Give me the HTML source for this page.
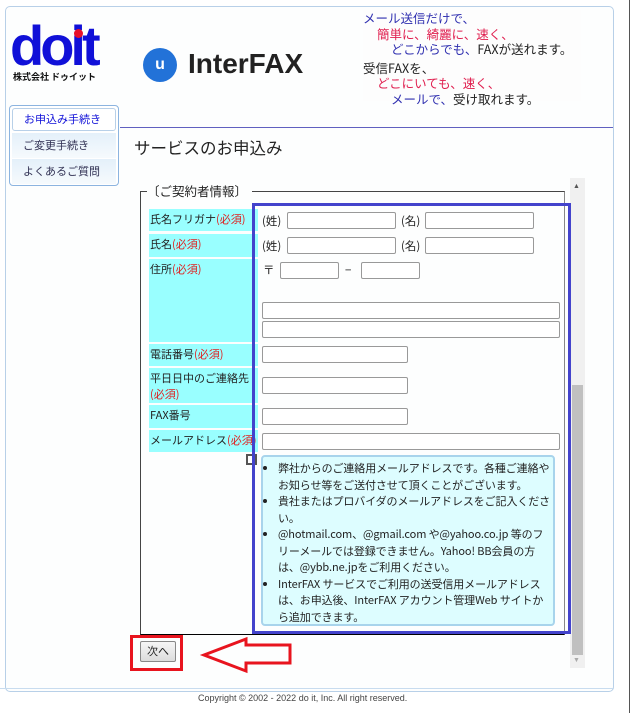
<!DOCTYPE html>
<html><head><meta charset="utf-8">
<style>
*{margin:0;padding:0;box-sizing:border-box}
body{width:640px;height:713px;background:#fff;position:relative;overflow:hidden;font-family:"Liberation Sans","Noto Sans CJK JP",sans-serif;color:#222}
.a{position:absolute}
.j{font-family:"Noto Sans CJK JP","Liberation Sans",sans-serif}
.inp{position:absolute;height:17px;border:1px solid #999;border-radius:2px;background:#fff}
.lab{position:absolute;left:149px;width:109px;background:#99ffff;font-size:11px;padding:2px 0 0 1px;line-height:16px}
.r{color:#e02020}
.t{position:absolute;font-size:11.5px;white-space:nowrap}
</style></head><body>
<div class="a" style="left:5px;top:6px;width:609px;height:686px;border:1px solid #b8d0e8;border-radius:5px;background:#fdfefe"></div>
<div class="a" style="left:629px;top:0;width:1px;height:713px;background:#555"></div>

<!-- doit logo -->
<div class="a" style="left:10px;top:18px;font:bold 56px/1 'Liberation Sans',sans-serif;color:#1010d8;letter-spacing:-4px">doit</div>
<div class="a" style="left:74px;top:29px;width:9px;height:9px;border-radius:50%;background:#e8102a"></div>
<div class="a j" style="left:13px;top:70px;font-size:9px;font-weight:bold;color:#111;white-space:nowrap">株式会社 ドゥイット</div>

<!-- InterFAX -->
<div class="a" style="left:143px;top:48px;width:34px;height:34px;border-radius:50%;background:#2272d8;color:#fff;font:bold 16px/34px 'Liberation Sans',sans-serif;text-align:center">u</div>
<div class="a" style="left:188px;top:47px;font:bold 28px/1.2 'Liberation Sans',sans-serif;color:#222">InterFAX</div>

<!-- slogan -->
<div class="a j" style="left:363px;top:10px;width:218px;height:91px;font-size:12.5px;line-height:15.5px;white-space:nowrap;background:#fdfdfd">
<div style="color:#3030b0">メール送信だけで、</div>
<div style="color:#e02050;padding-left:14px">簡単に、綺麗に、速く、</div>
<div style="padding-left:28px"><span style="color:#3030b0">どこからでも、</span>FAXが送れます。</div>
<div style="margin-top:3px">受信FAXを、</div>
<div style="color:#e02050;padding-left:14px">どこにいても、速く、</div>
<div style="padding-left:28px"><span style="color:#3030b0">メールで、</span>受け取れます。</div>
</div>
<div class="a" style="left:120px;top:127px;width:493px;height:1px;background:#6060c0"></div>

<!-- nav -->
<div class="a" style="left:9px;top:105px;width:110px;height:81px;border:1px solid #8cb4e0;border-radius:4px;background:#fff"></div>
<div class="a j" style="left:12px;top:108px;width:104px;height:23px;border:1px solid #b8d0e8;border-radius:3px;background:#fff;color:#1010d8;font-size:11px;line-height:21px;padding-left:11px">お申込み手続き</div>
<div class="a j" style="left:12px;top:133px;width:104px;height:25px;background:linear-gradient(#e4f0fa,#f6fafd);color:#335;font-size:11px;line-height:24px;padding-left:11px">ご変更手続き</div>
<div class="a j" style="left:12px;top:159px;width:104px;height:25px;background:linear-gradient(#e4f0fa,#f6fafd);color:#335;font-size:11px;line-height:25px;padding-left:11px">よくあるご質問</div>

<div class="a j" style="left:134px;top:135px;font-size:16.5px;color:#222">サービスのお申込み</div>

<!-- scrollbar -->
<div class="a" style="left:570px;top:178px;width:15px;height:490px;background:#f0f0f0"></div>
<div class="a" style="left:573px;top:183px;font-size:7px;color:#555">▲</div>
<div class="a" style="left:573px;top:657px;font-size:7px;color:#aaa">▼</div>
<div class="a" style="left:572px;top:385px;width:11px;height:270px;background:#c0c0c0"></div>

<!-- fieldset -->
<div class="a" style="left:140px;top:191px;width:425px;height:444px;border:1px solid #444;border-right-color:#888;border-bottom-color:#000"></div>
<div class="a j" style="left:147px;top:181px;background:#fdfefe;padding:0 5px 0 0;font-size:12.5px;color:#222">〔ご契約者情報〕</div>

<div class="lab j" style="top:209px;height:22px">氏名フリガナ<span class="r">(必須)</span></div>
<div class="lab j" style="top:234px;height:23px">氏名<span class="r">(必須)</span></div>
<div class="lab j" style="top:259px;height:83px">住所<span class="r">(必須)</span></div>
<div class="lab j" style="top:344px;height:22px">電話番号<span class="r">(必須)</span></div>
<div class="lab j" style="top:368px;height:35px">平日日中のご連絡先<br><span class="r">(必須)</span></div>
<div class="lab j" style="top:405px;height:23px">FAX番号</div>
<div class="lab j" style="top:430px;height:22px;white-space:nowrap;overflow:hidden">メールアドレス<span class="r">(必須)</span></div>

<div class="t j" style="left:262px;top:213px">(姓)</div>
<div class="inp" style="left:287px;top:212px;width:109px"></div>
<div class="t j" style="left:401px;top:213px">(名)</div>
<div class="inp" style="left:425px;top:212px;width:109px"></div>
<div class="t j" style="left:262px;top:238px">(姓)</div>
<div class="inp" style="left:287px;top:237px;width:109px"></div>
<div class="t j" style="left:401px;top:238px">(名)</div>
<div class="inp" style="left:425px;top:237px;width:109px"></div>
<div class="t j" style="left:263px;top:262px">〒</div>
<div class="inp" style="left:280px;top:262px;width:59px"></div>
<div class="t j" style="left:345px;top:262px">−</div>
<div class="inp" style="left:361px;top:262px;width:59px"></div>
<div class="inp" style="left:262px;top:302px;width:298px"></div>
<div class="inp" style="left:262px;top:321px;width:298px"></div>
<div class="inp" style="left:262px;top:346px;width:146px"></div>
<div class="inp" style="left:262px;top:377px;width:146px"></div>
<div class="inp" style="left:262px;top:408px;width:146px"></div>
<div class="inp" style="left:262px;top:433px;width:298px"></div>
<div class="a" style="left:246px;top:454px;width:11px;height:11px;border:2px solid #555;background:#fff"></div>

<div class="a j" style="left:261px;top:455px;width:294px;height:171px;background:#ddfdff;border:2px solid #a8d4ec;border-radius:4px;font-size:11px;line-height:16.5px;color:#222;padding:3px 2px 0 14px;letter-spacing:-0.1px">
<ul style="list-style:disc;padding-left:1px">
<li>弊社からのご連絡用メールアドレスです。各種ご連絡やお知らせ等をご送付させて頂くことがございます。</li>
<li>貴社またはプロバイダのメールアドレスをご記入ください。</li>
<li>@hotmail.com、@gmail.com や@yahoo.co.jp 等のフリーメールでは登録できません。Yahoo! BB会員の方は、@ybb.ne.jpをご利用ください。</li>
<li>InterFAX サービスでご利用の送受信用メールアドレスは、お申込後、InterFAX アカウント管理Web サイトから追加できます。</li>
</ul></div>

<div class="a" style="left:252px;top:203px;width:319px;height:431px;border:3px solid #4343cc"></div>

<!-- button -->
<div class="a j" style="left:140px;top:641px;width:36px;height:21px;border:1px solid #888;border-radius:2px;background:linear-gradient(#f6f6f6,#dcdcdc);font-size:11px;line-height:19px;text-align:center">次へ</div>
<div class="a" style="left:130px;top:635px;width:53px;height:36px;border:3px solid #e8141e"></div>
<svg class="a" style="left:198px;top:634px" width="98" height="56"><path d="M6 21 L48 5 L48 11 L92 11 L92 29 L48 29 L48 37 Z" fill="none" stroke="#e8141e" stroke-width="3"/></svg>

<div class="a" style="left:0;top:688px;width:614px;height:1px;background:#c8dcef"></div>
<div class="a" style="left:198px;top:693px;font-size:9px;color:#444;white-space:nowrap">Copyright © 2002 - 2022 do it, Inc. All right reserved.</div>
</body></html>
